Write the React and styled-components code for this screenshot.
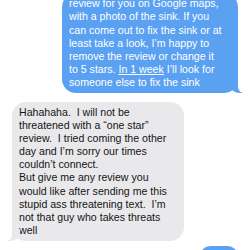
import React from "react";
import styled, { createGlobalStyle } from "styled-components";

const Global = createGlobalStyle`
  html, body { margin: 0; padding: 0; background: #ffffff; }
  body { font-family: "Liberation Sans", Arial, sans-serif; }
`;

const Viewport = styled.div`
  width: 250px;
  height: 250px;
  overflow: hidden;
  background: #ffffff;
  display: flex;
  flex-direction: column;
`;

const Thread = styled.div`
  display: flex;
  flex-direction: column;
  margin-top: -6.7px;
`;

const Bubble = styled.div`
  position: relative;
  box-sizing: border-box;
  width: ${(p) => p.$w}px;
  padding: 4px 7px 4px;
  border-radius: 14px;
  font-size: 10.6px;
  line-height: 13.1px;
  white-space: pre;
  align-self: ${(p) => (p.$me ? "flex-end" : "flex-start")};
  margin: ${(p) => (p.$me ? "0 12px 0 0" : "0 0 0 12px")};
  margin-top: ${(p) => p.$gap || 0}px;
  background: ${(p) => (p.$me ? "#5aa1f2" : "#e9e9eb")};
  color: ${(p) => (p.$me ? "#ffffff" : "#141414")};

  ${(p) =>
    p.$tail &&
    `
    &::before {
      content: "";
      position: absolute;
      bottom: 0;
      ${p.$me ? "right: -4px;" : "left: -4px;"}
      width: 12px;
      height: 12px;
      background: ${p.$me ? "#5aa1f2" : "#e9e9eb"};
      ${p.$me ? "border-bottom-left-radius: 10px 8px;" : "border-bottom-right-radius: 10px 8px;"}
    }
    &::after {
      content: "";
      position: absolute;
      bottom: 0;
      ${p.$me ? "right: -12px;" : "left: -12px;"}
      width: 12px;
      height: 13px;
      background: #ffffff;
      ${p.$me ? "border-bottom-left-radius: 6px;" : "border-bottom-right-radius: 6px;"}
    }
  `}
`;

const Underlined = styled.span`
  text-decoration: underline;
  text-underline-offset: 1px;
  text-decoration-thickness: 1px;
`;

export default function App() {
  return (
    <>
      <Global />
      <Viewport>
        <Thread>
          <Bubble $me $tail $w={176}>
            {"review for you on Google maps,\nwith a photo of the sink. If you\ncan come out to fix the sink or at\nleast take a look, I\u2019m happy to\nremove the review or change it\nto 5 stars. "}
            <Underlined>In 1 week</Underlined>
            {" I\u2019ll look for\nsomeone else to fix the sink"}
          </Bubble>
          <Bubble $tail $w={172} $gap={9}>
            {"Hahahaha.  I will not be\nthreatened with a \u201cone star\u201d\nreview.  I tried coming the other\nday and I\u2019m sorry our times\ncouldn\u2019t connect.\nBut give me any review you\nwould like after sending me this\nstupid ass threatening text.  I\u2019m\nnot that guy who takes threats\nwell"}
          </Bubble>
          <Bubble $me $w={38} $gap={5}>
            {"Ok"}
          </Bubble>
        </Thread>
      </Viewport>
    </>
  );
}
